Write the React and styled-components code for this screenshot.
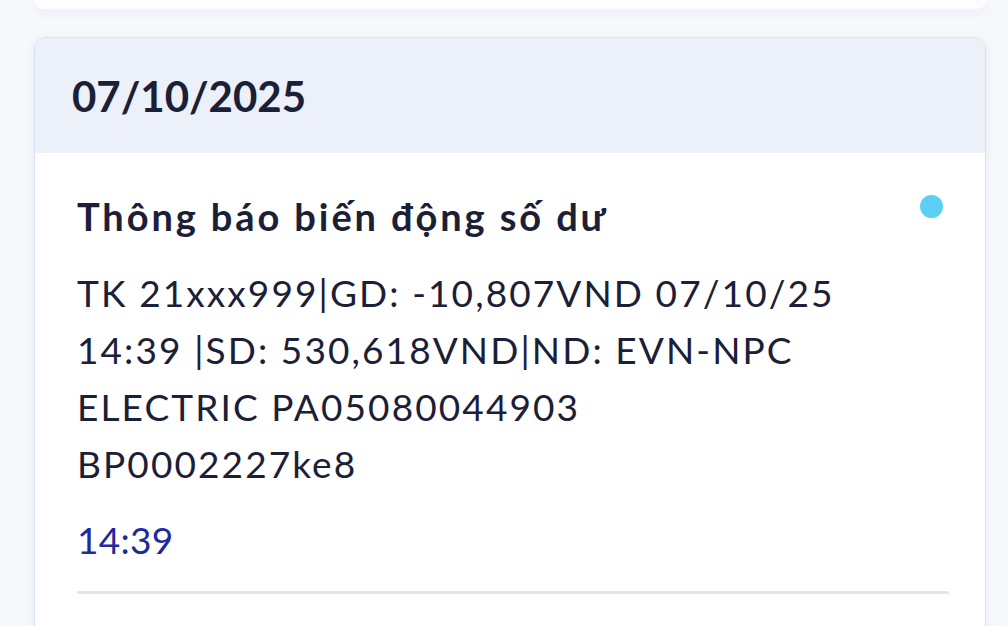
import React from "react";
import styled, { createGlobalStyle } from "styled-components";

const Global = createGlobalStyle`
  html, body { margin: 0; padding: 0; background: #f7f8fb; }
  body { font-family: Lato, "Noto Sans", sans-serif; color: #1b2036; }
`;

const Page = styled.div`
  width: 1008px;
  height: 626px;
  overflow: hidden;
  box-sizing: border-box;
  padding-left: 34px;
  display: flex;
  flex-direction: column;
  align-items: flex-start;
`;

const PrevCard = styled.div`
  flex-shrink: 0;
  width: 952px;
  height: 9px;
  background: #fdfdfe;
  border-radius: 0 0 12px 12px;
  box-shadow: 0 4px 10px rgba(200, 210, 230, 0.22);
`;

const Card = styled.div`
  margin-top: 28px;
  width: 952px;
  flex-shrink: 0;
  box-sizing: border-box;
  border: 1.5px solid #d8e1ef;
  border-radius: 12px;
  background: #fff;
  overflow: hidden;
  box-shadow: 0 2px 8px rgba(190, 205, 230, 0.3);
`;

const Header = styled.div`
  height: 115px;
  background: #ebf0f9;
  display: flex;
  align-items: center;
  padding-left: 37px;
`;

const DateText = styled.div`
  font-size: 42px;
  font-weight: 700;
  color: #1b2036;
`;

const Body = styled.div`
  padding: 35px 36px 80px 42px;
`;

const TitleRow = styled.div`
  display: flex;
  justify-content: space-between;
  align-items: flex-start;
`;

const Title = styled.div`
  font-size: 38px;
  font-weight: 700;
  line-height: 56px;
  letter-spacing: 2.9px;
`;

const Dot = styled.span`
  width: 23px;
  height: 23px;
  border-radius: 50%;
  background: #5ccff6;
  margin-top: 7px;
  margin-right: 6px;
`;

const Message = styled.div`
  margin-top: 20px;
  font-size: 37px;
  line-height: 57px;
  font-weight: 400;
  letter-spacing: 2.1px;
  width: 820px;
`;

const Time = styled.div`
  margin-top: 26px;
  font-size: 37px;
  line-height: 44px;
  letter-spacing: 0.3px;
  color: #1f2a9b;
`;

const Divider = styled.div`
  margin-top: 29px;
  height: 3px;
  background: #e3e5ea;
  border-radius: 2px;
`;

export default function App() {
  return (
    <Page>
      <Global />
      <PrevCard />
      <Card>
        <Header>
          <DateText>07/10/2025</DateText>
        </Header>
        <Body>
          <TitleRow>
            <Title>Thông báo biến động số dư</Title>
            <Dot />
          </TitleRow>
          <Message>
            TK 21xxx999|GD: -10,807VND 07/10/25
            <br />
            14:39 |SD: 530,618VND|ND: EVN-NPC
            <br />
            ELECTRIC PA05080044903
            <br />
            BP0002227ke8
          </Message>
          <Time>14:39</Time>
          <Divider />
        </Body>
      </Card>
    </Page>
  );
}
